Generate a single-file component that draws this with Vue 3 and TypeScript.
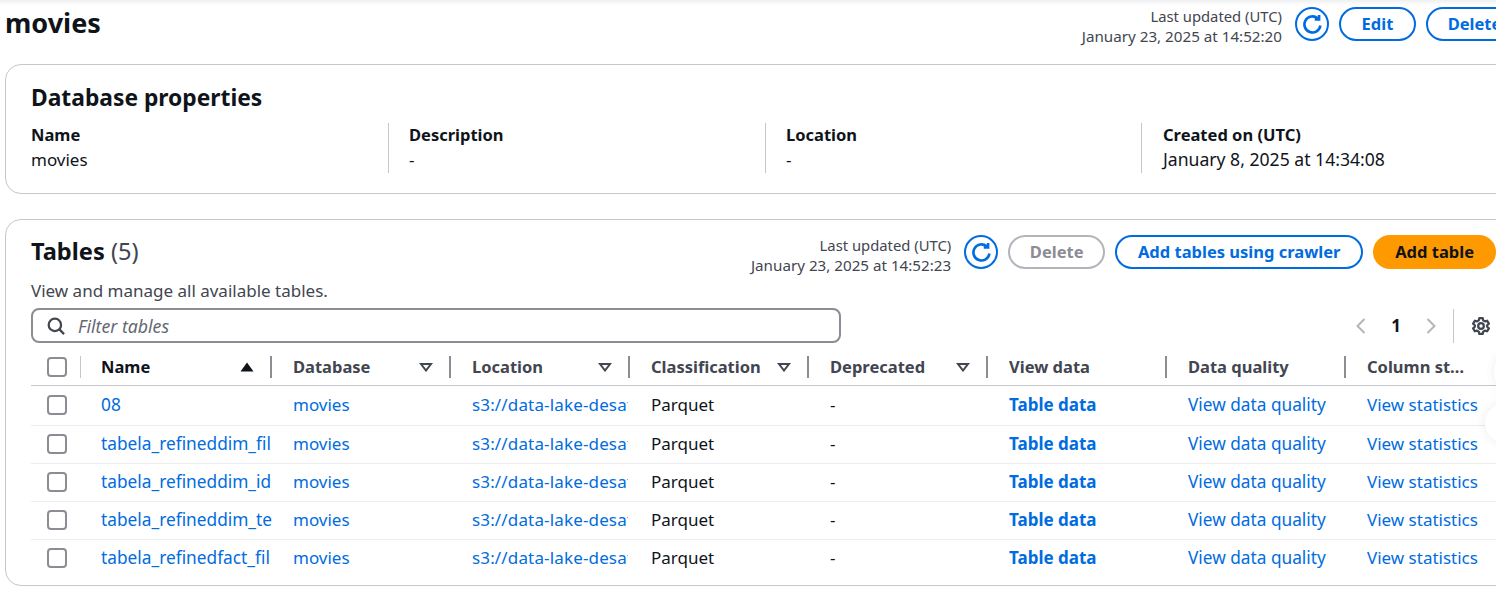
<template>
  <div class="viewport">
    <div class="top-shadow"></div>
    <div class="page">
      <header class="page-header">
        <h1>movies</h1>
        <div class="actions">
          <div class="updated">
            <div>Last updated (UTC)</div>
            <div class="stamp">January 23, 2025 at 14:52:20</div>
          </div>
          <button class="refresh">
            <svg viewBox="0 0 16 16" width="21" height="21"><path d="M14 8.800A6.100 6.100 0 1 1 12 3.400M13 .8v3.300H9.700" /></svg>
          </button>
          <button class="btn normal edit">Edit</button>
          <button class="btn normal del">Delete</button>
        </div>
      </header>

      <section class="card props">
        <h2>Database properties</h2>
        <div class="props-grid">
          <div v-for="p in properties" :key="p.label" class="prop">
            <div class="prop-label">{{ p.label }}</div>
            <div class="prop-value" :class="{ date: p.date }">{{ p.value }}</div>
          </div>
        </div>
      </section>

      <section class="card tables">
        <div class="tables-head">
          <div>
            <h2 class="tables-title">Tables <span class="count">(5)</span></h2>
            <p class="desc">View and manage all available tables.</p>
          </div>
          <div class="actions">
            <div class="updated">
              <div>Last updated (UTC)</div>
              <div class="stamp">January 23, 2025 at 14:52:23</div>
            </div>
            <button class="refresh">
              <svg viewBox="0 0 16 16" width="21" height="21"><path d="M14 8.800A6.100 6.100 0 1 1 12 3.400M13 .8v3.300H9.700" /></svg>
            </button>
            <button class="btn disabled del">Delete</button>
            <button class="btn normal crawler">Add tables using crawler</button>
            <button class="btn primary">Add table</button>
          </div>
        </div>

        <div class="tools">
          <label class="filter">
            <svg viewBox="0 0 16 16" width="18" height="18"><circle cx="7" cy="7" r="5.500" /><path d="M11 11l4.200 4.200" /></svg>
            <input placeholder="Filter tables" />
          </label>
          <div class="pager">
            <svg viewBox="0 0 16 16" width="16" height="16"><path d="M11.500 1 4.500 8l7 7" /></svg>
            <span class="page-no">1</span>
            <svg viewBox="0 0 16 16" width="16" height="16"><path d="m4.500 1 7 7-7 7" /></svg>
            <span class="pager-sep"></span>
            <svg class="gear" viewBox="0 0 16 16" width="18" height="18">
              <circle cx="8" cy="8" r="2.500" />
              <path d="M6.500 1h3l.5 2 1.500.9 2-.6 1.500 2.600-1.500 1.400v1.400l1.500 1.400-1.500 2.600-2-.6-1.500.9-.5 2h-3l-.5-2-1.500-.9-2 .6L1 10.100l1.500-1.400V7.300L1 5.900l1.500-2.600 2 .6 1.500-.9z" />
            </svg>
          </div>
        </div>

        <table>
          <colgroup>
            <col class="c-check" />
            <col class="c-name" />
            <col v-for="n in 6" :key="n" class="c-mid" />
            <col class="c-last" />
          </colgroup>
          <thead>
            <tr>
              <th class="check-cell"><span class="checkbox"></span><i class="light-sep"></i></th>
              <th v-for="(c, i) in columns" :key="c.label" :class="{ sorted: i === 0, last: i === columns.length - 1 }">
                <span class="th-label">{{ c.label }}</span>
                <svg v-if="c.sortable" class="sort" viewBox="0 0 14 10" width="14" height="10">
                  <path v-if="i === 0" class="solid" d="M7 .5 13.500 9.500H.5z" />
                  <path v-else class="hollow" d="M2 2h10L7 8.500z" />
                </svg>
                <i v-if="i < columns.length - 1" class="sep"></i>
              </th>
            </tr>
          </thead>
          <tbody>
            <tr v-for="name in rows" :key="name">
              <td class="check-cell"><span class="checkbox"></span></td>
              <td class="name-cell"><a>{{ name }}</a></td>
              <td><a>movies</a></td>
              <td><a class="s3">s3://data-lake-desaf</a></td>
              <td>Parquet</td>
              <td>-</td>
              <td><a class="strong">Table data</a></td>
              <td class="quality"><a>View data quality</a></td>
              <td><a>View statistics</a></td>
            </tr>
          </tbody>
        </table>
      </section>
    </div>
    <div class="float-btn upper"></div>
    <div class="float-btn lower"></div>
  </div>
</template>

<script setup lang="ts">
const properties = [
  { label: 'Name', value: 'movies', date: false },
  { label: 'Description', value: '-', date: false },
  { label: 'Location', value: '-', date: false },
  { label: 'Created on (UTC)', value: 'January 8, 2025 at 14:34:08', date: true },
]

const columns = [
  { label: 'Name', sortable: true },
  { label: 'Database', sortable: true },
  { label: 'Location', sortable: true },
  { label: 'Classification', sortable: true },
  { label: 'Deprecated', sortable: true },
  { label: 'View data', sortable: false },
  { label: 'Data quality', sortable: false },
  { label: 'Column statistics', sortable: false },
]

// names as far as the narrow column shows them
const rows = [
  '08',
  'tabela_refineddim_fil',
  'tabela_refineddim_id',
  'tabela_refineddim_te',
  'tabela_refinedfact_fil',
]
</script>

<style>
html,
body {
  margin: 0;
  background: #fff;
  overflow: hidden;
}
</style>

<style scoped>
.viewport {
  position: relative;
  width: 1496px;
  height: 598px;
  overflow: hidden;
  background: #fff;
  font-family: "Noto Sans", "Open Sans", sans-serif;
  font-size: 17px;
  line-height: 22px;
  color: #0f141a;
}
.top-shadow {
  position: absolute;
  top: 0;
  left: 0;
  right: 0;
  height: 5px;
  background: linear-gradient(#eeeff0, #fff);
}
.float-btn {
  position: absolute;
  border-radius: 50%;
  background: #fff;
  box-shadow: 0 0 12px rgba(0, 0, 0, 0.08);
}
.float-btn.upper {
  left: 1494px;
  top: 348px;
  width: 48px;
  height: 48px;
}
.float-btn.lower {
  left: 1485px;
  top: 403px;
  width: 40px;
  height: 40px;
}
.page {
  position: relative;
  width: 1518px;
  padding: 5px 0 0 5px;
}
.page-header {
  display: flex;
  justify-content: space-between;
  align-items: flex-start;
  height: 59px;
}
h1 {
  margin: 2px 0 0 0;
  font-size: 27px;
  line-height: 32px;
  font-weight: 700;
}
h2 {
  margin: 0;
  font-size: 22.8px;
  line-height: 30px;
  font-weight: 700;
}
.tables-title {
  font-size: 23.6px;
  line-height: 32px;
}
.actions {
  display: flex;
  align-items: flex-start;
  gap: 10px;
}
.page-header .actions {
  margin-top: 1px;
}
.page-header .refresh,
.page-header .btn {
  margin-top: 1px;
}
.updated {
  text-align: right;
  font-size: 14.8px;
  line-height: 20px;
  color: #424650;
  margin-right: 3px;
  white-space: nowrap;
}
.updated .stamp {
  font-size: 15.2px;
}
.refresh {
  width: 34px;
  height: 34px;
  padding: 0;
  border: 2px solid #006ce0;
  border-radius: 50%;
  background: #fff;
  display: flex;
  align-items: center;
  justify-content: center;
}
.refresh svg {
  fill: none;
  stroke: #006ce0;
  stroke-width: 2;
}
.btn {
  height: 34px;
  padding: 0 20px;
  border-radius: 17px;
  border: 2px solid #006ce0;
  background: #fff;
  color: #006ce0;
  font-family: inherit;
  font-size: 16.5px;
  font-weight: 700;
  line-height: 20px;
  white-space: nowrap;
}
.btn.edit {
  width: 77px;
  padding: 0;
}
.btn.del {
  width: 97px;
  padding: 0;
}
.btn.crawler {
  width: 248px;
  padding: 0;
}
.btn.disabled {
  border-color: #b4b4bb;
  color: #8c8c94;
}
.btn.primary {
  background: #ff9900;
  border-color: #ff9900;
  color: #0f141a;
}
.card {
  border: 1px solid #c6c6cd;
  border-radius: 16px;
  padding: 0 25px;
  box-sizing: border-box;
  width: 1517px;
}
.props {
  height: 130px;
  padding-top: 18px;
  margin-bottom: 25px;
}
.props-grid {
  display: grid;
  grid-template-columns: 357px 377px 376px 1fr;
  margin-top: 10px;
}
.prop {
  height: 50px;
  padding-left: 20px;
  border-left: 1px solid #c6c6cd;
  line-height: 25px;
}
.prop:first-child {
  padding-left: 0;
  border-left: 0;
}
.prop:last-child {
  padding-left: 21px;
}
.prop-label {
  margin-top: -1px;
  font-size: 16.5px;
  font-weight: 700;
}
.prop-value.date {
  font-size: 17.6px;
}
.tables {
  height: 367px;
  padding-top: 15px;
}
.tables-head {
  display: flex;
  justify-content: space-between;
  align-items: flex-start;
}
.count {
  font-weight: 400;
  color: #424650;
}
.desc {
  margin: 13px 0 0;
  line-height: 22px;
  color: #424650;
}
.tools {
  display: flex;
  justify-content: space-between;
  align-items: center;
  margin-top: 6px;
  height: 35px;
}
.filter {
  box-sizing: border-box;
  width: 810px;
  height: 35px;
  display: flex;
  align-items: center;
  gap: 13px;
  padding: 0 14px;
  border: 2px solid #8c8c94;
  border-radius: 8px;
}
.filter svg {
  fill: none;
  stroke: #424650;
  stroke-width: 2;
  flex: none;
}
.filter input {
  flex: 1;
  border: 0;
  outline: 0;
  padding: 1px 0 0;
  background: none;
  font-family: inherit;
  font-size: 17.7px;
  color: #0f141a;
}
.filter input::placeholder {
  font-style: italic;
  color: #656871;
  opacity: 1;
}
.pager {
  display: flex;
  align-items: center;
  padding: 1px 6px 0 0;
}
.pager > svg {
  fill: none;
  stroke: #b4b4bb;
  stroke-width: 2;
  flex: none;
}
.pager > svg.gear {
  stroke: #424650;
  stroke-linejoin: round;
}
.page-no {
  width: 54px;
  text-align: center;
  font-weight: 700;
}
.pager-sep {
  width: 1px;
  height: 34px;
  background: #c6c6cd;
  margin: 0 18px 0 14px;
}
table {
  width: 1466px;
  table-layout: fixed;
  border-collapse: collapse;
  margin-top: 6px;
}
.c-check {
  width: 50px;
}
.c-name {
  width: 191px;
}
.c-mid {
  width: 179px;
}
.c-last {
  width: 151px;
}
th {
  position: relative;
  height: 36px;
  padding: 0 21px;
  text-align: left;
  font-size: 16.5px;
  font-weight: 700;
  color: #424650;
  border-bottom: 1px solid #c6c6cd;
  box-sizing: border-box;
}
th.sorted {
  padding-left: 20px;
  color: #0f141a;
}
th.last {
  padding-right: 24px;
}
.th-label {
  display: block;
  overflow: hidden;
  white-space: nowrap;
  text-overflow: ellipsis;
}
.sort {
  position: absolute;
  right: 18px;
  top: 13px;
}
.sort .solid {
  fill: #0f141a;
}
.sort .hollow {
  fill: none;
  stroke: #424650;
  stroke-width: 2;
}
.sep {
  position: absolute;
  right: 0;
  top: 7px;
  width: 2px;
  height: 22px;
  background: #8c8c94;
}
.light-sep {
  position: absolute;
  right: 0;
  top: 7px;
  width: 1px;
  height: 22px;
  background: #c6c6cd;
}
td {
  height: 38px;
  padding: 0 21px;
  box-sizing: border-box;
  border-bottom: 1px solid #ebebf0;
  overflow: hidden;
  white-space: nowrap;
}
td.name-cell {
  padding: 0 0 0 20px;
  font-size: 17.3px;
}
td.quality {
  font-size: 17.25px;
}
tbody tr:first-child td {
  height: 40px;
}
tbody tr:last-child td {
  border-bottom: 0;
}
td a {
  color: #006ce0;
}
td a.strong {
  font-weight: 700;
}
td a.s3 {
  display: block;
  overflow: hidden;
  width: 156px;
  letter-spacing: 0.15px;
}
.check-cell {
  padding: 0 0 0 16px;
}
.checkbox {
  display: block;
  box-sizing: border-box;
  width: 20px;
  height: 20px;
  border: 2px solid #8c8c94;
  border-radius: 4px;
  background: #fff;
}
</style>
